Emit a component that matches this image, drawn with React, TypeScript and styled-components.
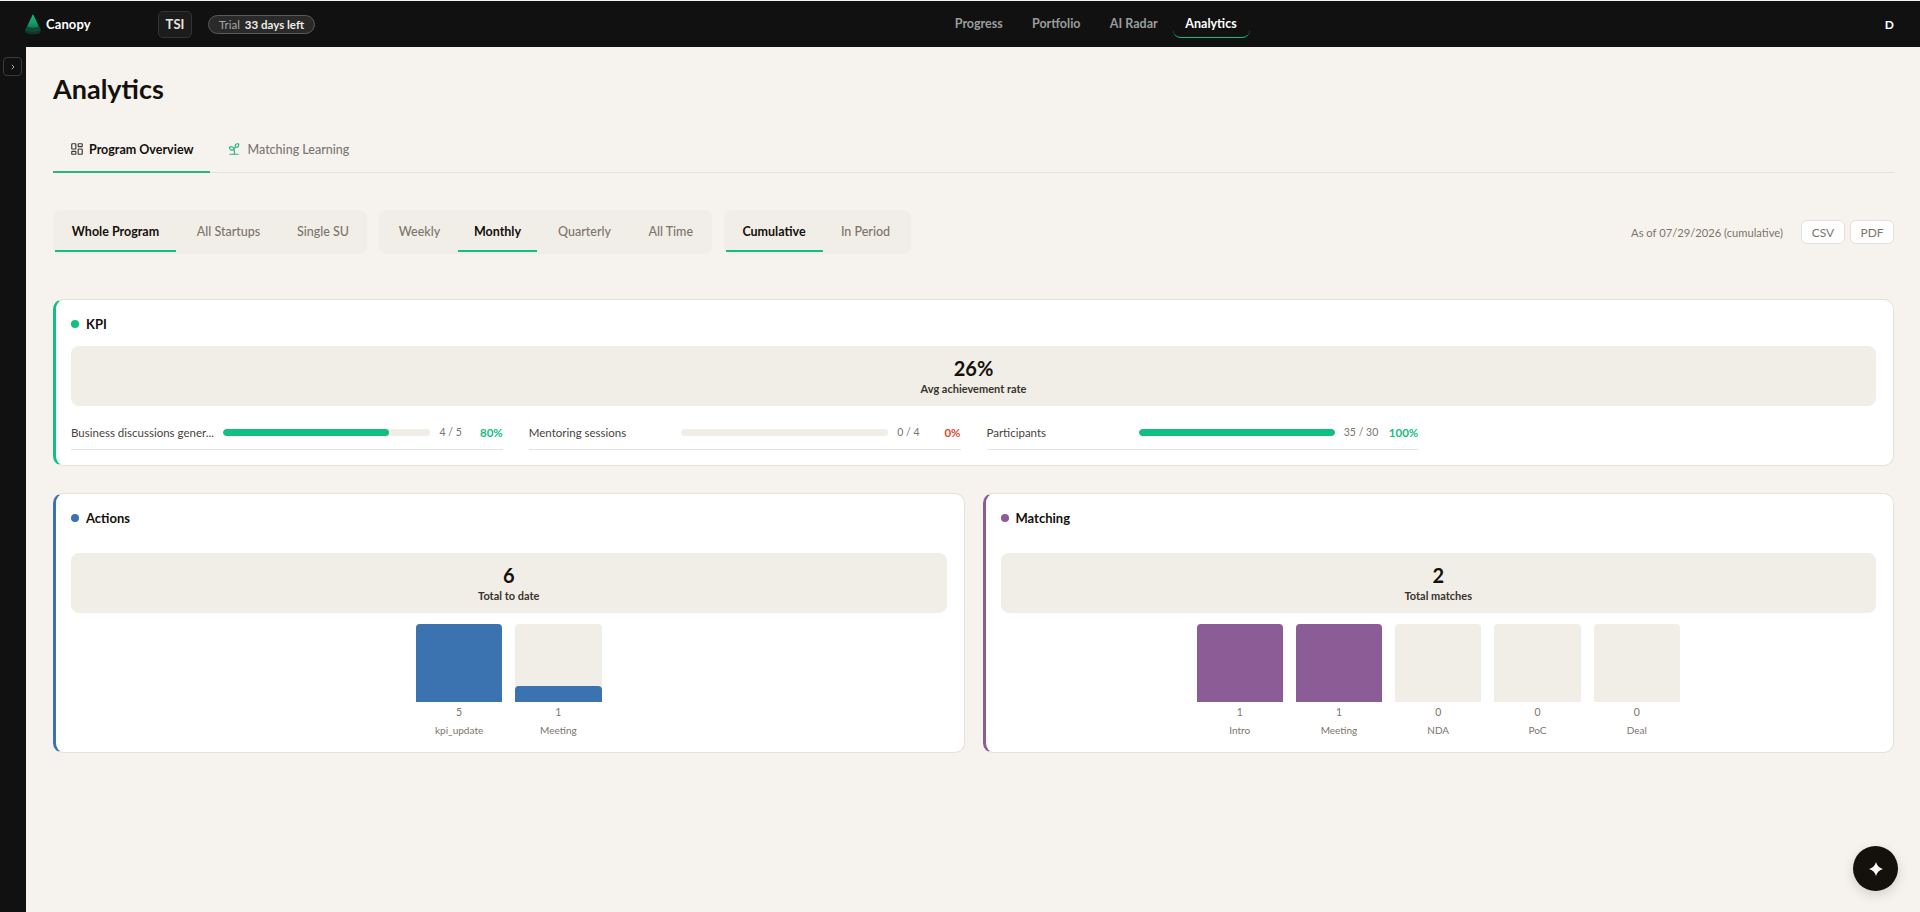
import React from "react";
import styled, { createGlobalStyle } from "styled-components";
import { LayoutDashboard, Sprout, ChevronRight } from "lucide-react";

const FONT = `Lato, "Noto Sans", sans-serif`;

const Global = createGlobalStyle`
  html, body { margin: 0; padding: 0; background: #f6f3ee; }
  body { font-family: ${FONT}; color: #14100c; }
  * { box-sizing: border-box; }
`;

const Page = styled.div`
  height: 912px;
  padding-top: 1px;
  display: flex;
  flex-direction: column;
  overflow: hidden;
`;
const Header = styled.header`
  height: 46px;
  flex: none;
  background: #111111;
  display: flex;
  align-items: center;
  padding: 0 26px 0 24px;
`;
const HeaderLeft = styled.div`
  display: flex;
  align-items: center;
  width: 916px;
  flex: none;
`;
const Brand = styled.div`
  display: flex;
  align-items: center;
  gap: 4px;
  width: 134px;
`;
const BrandName = styled.span`
  color: #fff;
  font-size: 13px;
  font-weight: 700;
  letter-spacing: 0.1px;
`;
const OrgChip = styled.div`
  width: 34px;
  height: 27px;
  border: 1px solid #333;
  background: #1c1c1c;
  border-radius: 5px;
  color: #e8e4de;
  font-size: 13px;
  font-weight: 700;
  display: flex;
  align-items: center;
  justify-content: center;
  margin-right: 16px;
`;
const TrialPill = styled.div`
  height: 19px;
  width: 107px;
  border: 1px solid #5a5a5a;
  background: #2a2a2a;
  border-radius: 10px;
  display: flex;
  align-items: center;
  justify-content: center;
  gap: 5px;
  font-size: 11.5px;
  white-space: nowrap;
`;
const TrialLabel = styled.span`
  color: #a5a5a5;
`;
const TrialDays = styled.span`
  color: #f0ece6;
  font-weight: 700;
`;
const Nav = styled.nav`
  display: flex;
  align-items: stretch;
  height: 46px;
`;
const NavItem = styled.div<{ $active?: boolean }>`
  width: ${(p) => (p.$active ? "77px" : "77.5px")};
  margin-top: 8px;
  height: 29px;
  display: flex;
  align-items: center;
  justify-content: center;
  font-size: 12.5px;
  font-weight: 700;
  color: ${(p) => (p.$active ? "#ffffff" : "#9a9d9c")};
  border-bottom: 1px solid ${(p) => (p.$active ? "#10c080" : "transparent")};
  border-radius: 0 0 8px 8px;
`;
const HeaderRight = styled.div`
  flex: 1;
  display: flex;
  justify-content: flex-end;
  color: #fff;
  font-size: 12px;
  font-weight: 700;
`;
const Body = styled.div`
  flex: 1;
  display: flex;
  min-height: 0;
`;
const Side = styled.aside`
  width: 26px;
  flex: none;
  background: #111111;
  padding: 10px 3px;
`;
const SideToggle = styled.div`
  width: 19px;
  height: 19px;
  border: 1px solid #3a3a3a;
  border-radius: 4px;
  display: flex;
  align-items: center;
  justify-content: center;
  color: #a9a9a9;
`;
const Main = styled.main`
  flex: 1;
  min-width: 0;
  padding: 25px 26px 0 27px;
  position: relative;
`;
const Title = styled.h1`
  margin: 0 0 24px;
  font-size: 27px;
  line-height: 34px;
  font-weight: 700;
  color: #14100c;
`;
const Tabs = styled.div`
  display: flex;
  height: 43px;
  border-bottom: 1px solid #e5e0d8;
`;
const Tab = styled.div<{ $active?: boolean }>`
  display: flex;
  align-items: center;
  gap: ${(p) => (p.$active ? "5px" : "7px")};
  height: 43px;
  padding: 0 16px 3px 17px;
  font-size: 12.5px;
  font-weight: ${(p) => (p.$active ? 700 : 500)};
  color: ${(p) => (p.$active ? "#14100c" : "#7a7672")};
  border-bottom: 2px solid ${(p) => (p.$active ? "#2fb384" : "transparent")};
  & svg { color: ${(p) => (p.$active ? "#3a3a3a" : "#2fb384")}; }
`;
const FilterRow = styled.div`
  display: flex;
  align-items: center;
  gap: 12px;
  margin: 37px 0 45px;
`;
const FilterGroup = styled.div`
  display: flex;
  height: 44px;
  padding: 2px;
  background: #f1eee7;
  border-radius: 8px;
`;
const FilterBtn = styled.div<{ $active?: boolean; $w: number }>`
  width: ${(p) => p.$w}px;
  display: flex;
  align-items: center;
  justify-content: center;
  font-size: 12.5px;
  font-weight: ${(p) => (p.$active ? 700 : 500)};
  color: ${(p) => (p.$active ? "#14100c" : "#7d746c")};
  border-bottom: 2px solid ${(p) => (p.$active ? "#10c080" : "transparent")};
`;
const FilterEnd = styled.div`
  margin-left: auto;
  display: flex;
  align-items: center;
`;
const AsOf = styled.span`
  font-size: 11.2px;
  color: #7d746c;
  margin-right: 13px;
`;
const ExportBtn = styled.div`
  height: 24px;
  width: 44px;
  background: #fff;
  border: 1px solid #e5e0d8;
  border-radius: 6px;
  margin-left: 5px;
  display: flex;
  align-items: center;
  justify-content: center;
  font-size: 12px;
  color: #7d746c;
`;
const Card = styled.section<{ $color: string }>`
  background: #fff;
  border: 1px solid #e5e0d8;
  border-left: 3px solid ${(p) => p.$color};
  border-radius: 10px;
  padding: 15px 17px 15px 15px;
`;
const CardHead = styled.div<{ $gap: number }>`
  display: flex;
  align-items: center;
  gap: 7px;
  height: 18px;
  margin-bottom: ${(p) => p.$gap}px;
  font-size: 13px;
  font-weight: 700;
`;
const Dot = styled.span<{ $color: string }>`
  width: 8px;
  height: 8px;
  border-radius: 50%;
  background: ${(p) => p.$color};
`;
const Banner = styled.div`
  height: 60px;
  padding-bottom: 2px;
  background: #f1eee7;
  border-radius: 8px;
  display: flex;
  flex-direction: column;
  align-items: center;
  justify-content: center;
`;
const BigValue = styled.div`
  font-size: 20px;
  line-height: 26px;
  font-weight: 700;
`;
const BannerLabel = styled.div`
  font-size: 11px;
  line-height: 15px;
  font-weight: 700;
  color: #3a332c;
`;
const KpiGrid = styled.div`
  display: grid;
  grid-template-columns: repeat(4, 1fr);
  column-gap: 26px;
  margin-top: 15px;
`;
const KpiRow = styled.div`
  display: flex;
  align-items: center;
  height: 29px;
  padding-bottom: 6px;
  border-bottom: 1px solid #e5e2da;
`;
const KpiLabel = styled.span`
  width: 152px;
  flex: none;
  font-size: 11.5px;
  color: #4a433c;
  white-space: nowrap;
`;
const KpiTrack = styled.div`
  flex: 1;
  height: 7px;
  border-radius: 4px;
  background: #f1eee7;
  overflow: hidden;
`;
const KpiFill = styled.div`
  height: 100%;
  border-radius: 4px;
  background: #10c080;
`;
const KpiCount = styled.span`
  margin-left: 9px;
  font-size: 10.5px;
  color: #7d746c;
  white-space: nowrap;
`;
const KpiPct = styled.span<{ $w: number; $color: string }>`
  width: ${(p) => p.$w}px;
  flex: none;
  text-align: right;
  font-size: 11.5px;
  font-weight: 700;
  color: ${(p) => p.$color};
`;
const TwoCols = styled.div`
  display: grid;
  grid-template-columns: 1fr 1fr;
  gap: 18px;
  margin-top: 27px;
`;
const Chart = styled.div`
  display: flex;
  justify-content: center;
  gap: 13px;
  margin-top: 11px;
`;
const BarCol = styled.div`
  width: 86.25px;
  display: flex;
  flex-direction: column;
  align-items: center;
`;
const BarTrack = styled.div`
  width: 100%;
  height: 78px;
  background: #f1eee7;
  border-radius: 4px 4px 0 0;
  display: flex;
  align-items: flex-end;
`;
const BarFill = styled.div<{ $color: string }>`
  width: 100%;
  background: ${(p) => p.$color};
  border-radius: 4px 4px 0 0;
`;
const BarValue = styled.div`
  font-size: 10.5px;
  line-height: 14px;
  margin-top: 3px;
  color: #7d746c;
`;
const BarLabel = styled.div`
  font-size: 10px;
  line-height: 14px;
  margin-top: 4px;
  color: #7d746c;
`;
const Fab = styled.div`
  position: absolute;
  right: 22px;
  bottom: 21px;
  width: 45px;
  height: 45px;
  border-radius: 50%;
  background: #14100c;
  box-shadow: 0 4px 12px rgba(20, 16, 12, 0.15);
  display: flex;
  align-items: center;
  justify-content: center;
`;

const BLUE = "#3b72b0";
const PURPLE = "#8b5c96";
const GREEN = "#10c080";

const Logo = () => (
  <svg width="18" height="24" viewBox="0 0 18 24" aria-hidden="true">
    <defs>
      <linearGradient id="lg" x1="0" y1="0" x2="0" y2="1">
        <stop offset="0" stopColor="#10c080" />
        <stop offset="0.55" stopColor="#149a68" />
        <stop offset="1" stopColor="#0d5a40" />
      </linearGradient>
    </defs>
    <ellipse cx="9" cy="19" rx="8" ry="3.4" fill="#16352a" />
    <path d="M9 2 L16.6 18 Q9 21 1.4 18 Z" fill="url(#lg)" />
    <path d="M3 14.6 Q9 17 15 14.6 L16.6 18 Q9 21 1.4 18 Z" fill="#0e4a36" />
  </svg>
);

const Spark = () => (
  <svg width="16" height="16" viewBox="0 0 16 16" aria-hidden="true">
    <path d="M8 1 C8.9 4.6 11.4 7.1 15 8 C11.4 8.9 8.9 11.4 8 15 C7.1 11.4 4.6 8.9 1 8 C4.6 7.1 7.1 4.6 8 1 Z" fill="#fff" />
  </svg>
);

const kpis = [
  { label: "Business discussions gener...", count: "4 / 5", pct: "80%", w: 80, pw: 41, color: GREEN },
  { label: "Mentoring sessions", count: "0 / 4", pct: "0%", w: 0, pw: 41, color: "#e8452c" },
  { label: "Participants", count: "35 / 30", pct: "100%", w: 100, pw: 40, color: GREEN },
];

const actions = [
  { label: "kpi_update", value: 5, h: 100 },
  { label: "Meeting", value: 1, h: 20 },
];
const matches = [
  { label: "Intro", value: 1, h: 100 },
  { label: "Meeting", value: 1, h: 100 },
  { label: "NDA", value: 0, h: 0 },
  { label: "PoC", value: 0, h: 0 },
  { label: "Deal", value: 0, h: 0 },
];

const Bars = ({ data, color }: { data: { label: string; value: number; h: number }[]; color: string }) => (
  <Chart>
    {data.map((d) => (
      <BarCol key={d.label}>
        <BarTrack>
          <BarFill $color={color} style={{ height: `${d.h}%` }} />
        </BarTrack>
        <BarValue>{d.value}</BarValue>
        <BarLabel>{d.label}</BarLabel>
      </BarCol>
    ))}
  </Chart>
);

export default function App() {
  return (
    <Page>
      <Global />
      <Header>
        <HeaderLeft>
          <Brand>
            <Logo />
            <BrandName>Canopy</BrandName>
          </Brand>
          <OrgChip>TSI</OrgChip>
          <TrialPill>
            <TrialLabel>Trial</TrialLabel>
            <TrialDays>33 days left</TrialDays>
          </TrialPill>
        </HeaderLeft>
        <Nav>
          <NavItem>Progress</NavItem>
          <NavItem>Portfolio</NavItem>
          <NavItem>AI Radar</NavItem>
          <NavItem $active>Analytics</NavItem>
        </Nav>
        <HeaderRight>D</HeaderRight>
      </Header>
      <Body>
        <Side>
          <SideToggle>
            <ChevronRight size={8} strokeWidth={3} />
          </SideToggle>
        </Side>
        <Main>
          <Title>Analytics</Title>
          <Tabs>
            <Tab $active>
              <LayoutDashboard size={14} />
              Program Overview
            </Tab>
            <Tab>
              <Sprout size={14} />
              Matching Learning
            </Tab>
          </Tabs>
          <FilterRow>
            <FilterGroup>
              <FilterBtn $active $w={121}>Whole Program</FilterBtn>
              <FilterBtn $w={105}>All Startups</FilterBtn>
              <FilterBtn $w={84}>Single SU</FilterBtn>
            </FilterGroup>
            <FilterGroup>
              <FilterBtn $w={77}>Weekly</FilterBtn>
              <FilterBtn $active $w={79}>Monthly</FilterBtn>
              <FilterBtn $w={95}>Quarterly</FilterBtn>
              <FilterBtn $w={77.5}>All Time</FilterBtn>
            </FilterGroup>
            <FilterGroup>
              <FilterBtn $active $w={97}>Cumulative</FilterBtn>
              <FilterBtn $w={86}>In Period</FilterBtn>
            </FilterGroup>
            <FilterEnd>
              <AsOf>As of 07/29/2026 (cumulative)</AsOf>
              <ExportBtn>CSV</ExportBtn>
              <ExportBtn>PDF</ExportBtn>
            </FilterEnd>
          </FilterRow>
          <Card $color={GREEN}>
            <CardHead $gap={13}>
              <Dot $color={GREEN} />
              KPI
            </CardHead>
            <Banner>
              <BigValue>26%</BigValue>
              <BannerLabel>Avg achievement rate</BannerLabel>
            </Banner>
            <KpiGrid>
              {kpis.map((k) => (
                <KpiRow key={k.label}>
                  <KpiLabel>{k.label}</KpiLabel>
                  <KpiTrack>
                    <KpiFill style={{ width: `${k.w}%` }} />
                  </KpiTrack>
                  <KpiCount>{k.count}</KpiCount>
                  <KpiPct $w={k.pw} $color={k.color}>{k.pct}</KpiPct>
                </KpiRow>
              ))}
            </KpiGrid>
          </Card>
          <TwoCols>
            <Card $color={BLUE}>
              <CardHead $gap={26}>
                <Dot $color={BLUE} />
                Actions
              </CardHead>
              <Banner>
                <BigValue>6</BigValue>
                <BannerLabel>Total to date</BannerLabel>
              </Banner>
              <Bars data={actions} color={BLUE} />
            </Card>
            <Card $color={PURPLE}>
              <CardHead $gap={26}>
                <Dot $color={PURPLE} />
                Matching
              </CardHead>
              <Banner>
                <BigValue>2</BigValue>
                <BannerLabel>Total matches</BannerLabel>
              </Banner>
              <Bars data={matches} color={PURPLE} />
            </Card>
          </TwoCols>
          <Fab>
            <Spark />
          </Fab>
        </Main>
      </Body>
    </Page>
  );
}
